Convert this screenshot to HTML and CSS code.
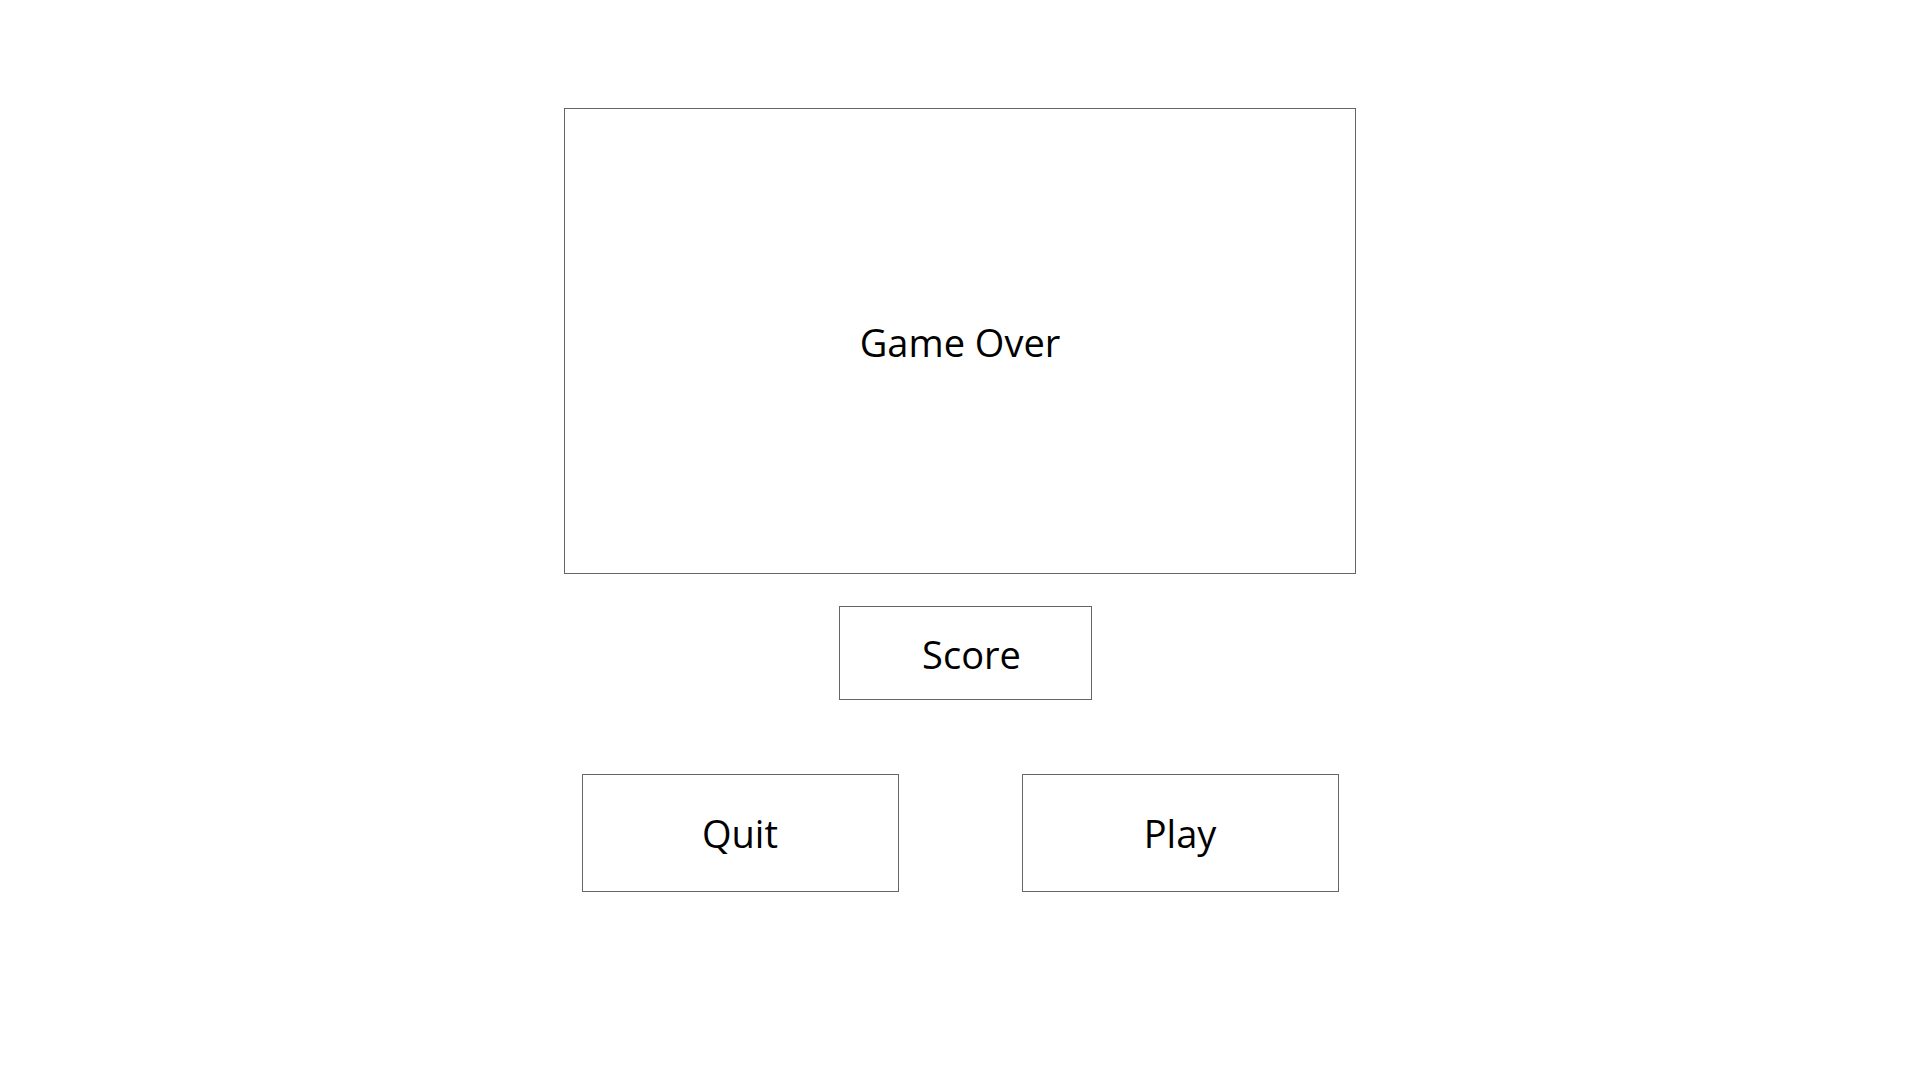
FILE: index.html
```html
<!DOCTYPE html>
<html>
<head>
<meta charset="utf-8">
<link rel="stylesheet" href="styles.css">
</head>
<body>
<main class="screen">
  <section class="banner"><span class="banner-text">Game Over</span></section>
  <div class="score">Score</div>
  <div class="actions">
    <button class="btn">Quit</button>
    <button class="btn">Play</button>
  </div>
</main>
</body>
</html>
```
FILE: styles.css
```css
html, body {
  margin: 0;
  padding: 0;
  background: #ffffff;
}
body {
  font-family: "Open Sans", "Noto Sans", "Liberation Sans", sans-serif;
  color: #000;
}
.screen {
  display: flex;
  flex-direction: column;
  align-items: center;
  padding-top: 108px;
}
.banner {
  box-sizing: border-box;
  width: 792px;
  height: 466px;
  border: 1px solid #666666;
  display: flex;
  align-items: center;
  justify-content: center;
}
.banner-text {
  font-size: 38px;
  margin-top: 2px;
}
.score {
  box-sizing: border-box;
  width: 253px;
  height: 94px;
  margin-top: 32px;
  margin-left: 11px;
  border: 1px solid #666666;
  display: flex;
  align-items: center;
  justify-content: center;
  padding-left: 12px;
  padding-top: 2px;
  font-size: 38px;
}
.actions {
  display: flex;
  gap: 123px;
  margin-top: 74px;
}
.btn {
  box-sizing: border-box;
  width: 317px;
  height: 118px;
  border: 1px solid #666666;
  background: #fff;
  font-family: inherit;
  font-size: 38px;
  color: #000;
  padding: 0;
  display: flex;
  align-items: center;
  justify-content: center;
}
```
